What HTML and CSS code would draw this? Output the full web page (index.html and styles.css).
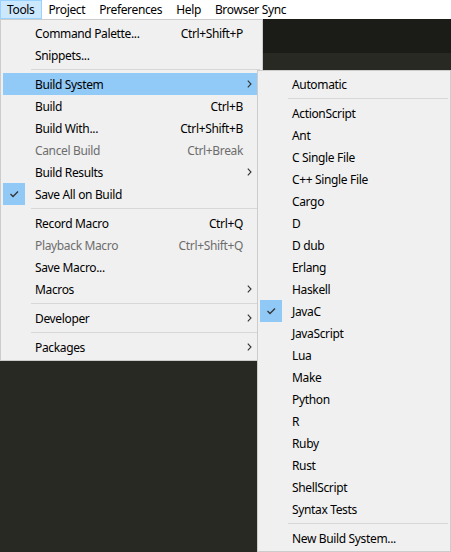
FILE: index.html
```html
<!DOCTYPE html>
<html>
<head>
<meta charset="utf-8">
<link rel="stylesheet" href="styles.css">
</head>
<body>
<div class="app">
  <div class="menubar">
    <span class="mb-item active">Tools</span>
    <span class="mb-item">Project</span>
    <span class="mb-item">Preferences</span>
    <span class="mb-item">Help</span>
    <span class="mb-item">Browser Sync</span>
  </div>
  <div class="tabbar"></div>
  <div class="editor"></div>
</div>

<div class="menu menu-tools">
  <div class="mi"><span class="g"></span><span class="l">Command Palette...</span><span class="k">Ctrl+Shift+P</span><span class="a"></span></div>
  <div class="mi"><span class="g"></span><span class="l">Snippets...</span><span class="k"></span><span class="a"></span></div>
  <div class="sep"></div>
  <div class="mi hl"><span class="g"></span><span class="l">Build System</span><span class="k"></span><span class="a"><svg width="5" height="8" viewBox="0 0 5 8"><path d="M0.8 0.6 L4 4 L0.8 7.4" fill="none" stroke="#333" stroke-width="1.1"/></svg></span></div>
  <div class="mi"><span class="g"></span><span class="l">Build</span><span class="k">Ctrl+B</span><span class="a"></span></div>
  <div class="mi"><span class="g"></span><span class="l">Build With...</span><span class="k">Ctrl+Shift+B</span><span class="a"></span></div>
  <div class="mi dis"><span class="g"></span><span class="l">Cancel Build</span><span class="k">Ctrl+Break</span><span class="a"></span></div>
  <div class="mi"><span class="g"></span><span class="l">Build Results</span><span class="k"></span><span class="a"><svg width="5" height="8" viewBox="0 0 5 8"><path d="M0.8 0.6 L4 4 L0.8 7.4" fill="none" stroke="#333" stroke-width="1.1"/></svg></span></div>
  <div class="mi"><span class="g chk"><svg width="22" height="22" viewBox="0 0 22 22"><path d="M7.5 11 L10 13.5 L15 8.5" fill="none" stroke="#333" stroke-width="1.3"/></svg></span><span class="l">Save All on Build</span><span class="k"></span><span class="a"></span></div>
  <div class="sep"></div>
  <div class="mi"><span class="g"></span><span class="l">Record Macro</span><span class="k">Ctrl+Q</span><span class="a"></span></div>
  <div class="mi dis"><span class="g"></span><span class="l">Playback Macro</span><span class="k">Ctrl+Shift+Q</span><span class="a"></span></div>
  <div class="mi"><span class="g"></span><span class="l">Save Macro...</span><span class="k"></span><span class="a"></span></div>
  <div class="mi"><span class="g"></span><span class="l">Macros</span><span class="k"></span><span class="a"><svg width="5" height="8" viewBox="0 0 5 8"><path d="M0.8 0.6 L4 4 L0.8 7.4" fill="none" stroke="#333" stroke-width="1.1"/></svg></span></div>
  <div class="sep"></div>
  <div class="mi"><span class="g"></span><span class="l">Developer</span><span class="k"></span><span class="a"><svg width="5" height="8" viewBox="0 0 5 8"><path d="M0.8 0.6 L4 4 L0.8 7.4" fill="none" stroke="#333" stroke-width="1.1"/></svg></span></div>
  <div class="sep"></div>
  <div class="mi"><span class="g"></span><span class="l">Packages</span><span class="k"></span><span class="a"><svg width="5" height="8" viewBox="0 0 5 8"><path d="M0.8 0.6 L4 4 L0.8 7.4" fill="none" stroke="#333" stroke-width="1.1"/></svg></span></div>
</div>

<div class="menu menu-build">
  <div class="mi"><span class="g"></span><span class="l">Automatic</span></div>
  <div class="sep"></div>
  <div class="mi"><span class="g"></span><span class="l">ActionScript</span></div>
  <div class="mi"><span class="g"></span><span class="l">Ant</span></div>
  <div class="mi"><span class="g"></span><span class="l">C Single File</span></div>
  <div class="mi"><span class="g"></span><span class="l">C++ Single File</span></div>
  <div class="mi"><span class="g"></span><span class="l">Cargo</span></div>
  <div class="mi"><span class="g"></span><span class="l">D</span></div>
  <div class="mi"><span class="g"></span><span class="l">D dub</span></div>
  <div class="mi"><span class="g"></span><span class="l">Erlang</span></div>
  <div class="mi"><span class="g"></span><span class="l">Haskell</span></div>
  <div class="mi"><span class="g chk"><svg width="22" height="22" viewBox="0 0 22 22"><path d="M7.5 11 L10 13.5 L15 8.5" fill="none" stroke="#333" stroke-width="1.3"/></svg></span><span class="l">JavaC</span></div>
  <div class="mi"><span class="g"></span><span class="l">JavaScript</span></div>
  <div class="mi"><span class="g"></span><span class="l">Lua</span></div>
  <div class="mi"><span class="g"></span><span class="l">Make</span></div>
  <div class="mi"><span class="g"></span><span class="l">Python</span></div>
  <div class="mi"><span class="g"></span><span class="l">R</span></div>
  <div class="mi"><span class="g"></span><span class="l">Ruby</span></div>
  <div class="mi"><span class="g"></span><span class="l">Rust</span></div>
  <div class="mi"><span class="g"></span><span class="l">ShellScript</span></div>
  <div class="mi"><span class="g"></span><span class="l">Syntax Tests</span></div>
  <div class="sep"></div>
  <div class="mi"><span class="g"></span><span class="l">New Build System...</span></div>
</div>
</body>
</html>
```

FILE: styles.css
```css
html, body {
  margin: 0;
  padding: 0;
}
body {
  font-family: "Noto Sans", "Liberation Sans", sans-serif;
  font-size: 12px;
  letter-spacing: -0.35px;
  color: #000;
  background: #282923;
  overflow: hidden;
}
.app {
  display: flex;
  flex-direction: column;
  height: 552px;
}
.menubar {
  display: flex;
  height: 19px;
  background: #fff;
  align-items: stretch;
}
.mb-item {
  padding: 0 7px 0 6px;
  line-height: 18px;
  border: 1px solid transparent;
  border-bottom: 0;
  margin-left: -1px;
}
.mb-item:first-child { margin-left: 0; }
.mb-item.active {
  background: #cce8ff;
  border-color: #99d1ff;
  border-bottom: 1px solid #99d1ff;
  line-height: 17px;
}
.tabbar {
  height: 34px;
  background: #1b1b17;
}
.editor {
  flex: 1;
  background: #282923;
}
.menu {
  position: absolute;
  background: #f0f0f0;
  border: 1px solid #cccccc;
  padding: 2px;
  box-sizing: border-box;
}
.menu-tools {
  left: 0;
  top: 19px;
  width: 263px;
  height: 342px;
}
.menu-build {
  left: 257px;
  top: 70px;
  width: 194px;
  height: 482px;
}
.mi {
  display: flex;
  align-items: center;
  height: 22px;
  white-space: nowrap;
}
.mi.hl { background: #91c9f7; }
.mi.dis { color: #6d6d6d; }
.g {
  flex: 0 0 22px;
  height: 22px;
  margin-right: 10px;
}
.g.chk { background: #90c8f6; }
.g svg { display: block; }
.l { flex: 1; }
.k { text-align: right; }
.a {
  flex: 0 0 17px;
  display: flex;
  justify-content: flex-end;
  padding-right: 8px;
  box-sizing: border-box;
}
.a svg { display: block; }
.sep {
  height: 7px;
  display: flex;
  align-items: center;
  margin-left: 28px;
}
.sep::after {
  content: "";
  flex: 1;
  height: 1px;
  background: #d7d7d7;
}
```
